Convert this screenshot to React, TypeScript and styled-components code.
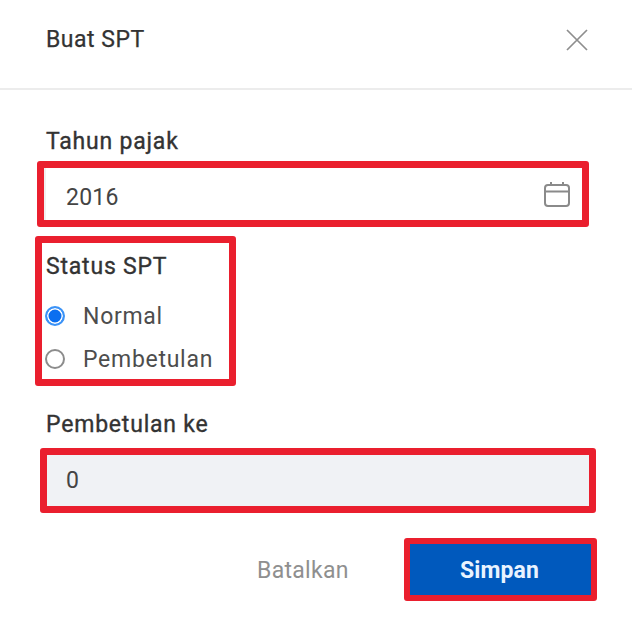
import React from "react";
import styled, { createGlobalStyle } from "styled-components";

const Global = createGlobalStyle`
  html, body { margin: 0; padding: 0; background: #fff; }
  body { font-family: Roboto, "Liberation Sans", sans-serif; color: #333; }
`;

const Dialog = styled.div`
  width: 632px;
  height: 628px;
  overflow: hidden;
  background: #fff;
  display: flex;
  flex-direction: column;
`;

const Header = styled.header`
  box-sizing: border-box;
  border-bottom: 2px solid #ececec;
  height: 90px;
  padding: 0 44px 0 46px;
  display: flex;
  align-items: flex-start;
  justify-content: space-between;
`;

const Title = styled.h1`
  margin: 26px 0 0;
  font-size: 23px;
  line-height: 28px;
  font-weight: 400;
  letter-spacing: 0.5px;
  color: #333;
  -webkit-text-stroke: 0.25px #333;
`;

const Close = styled.button`
  margin: 29px 0 0;
  padding: 0;
  width: 22px;
  height: 22px;
  border: 0;
  background: none;
  display: flex;
`;

const Body = styled.div`
  display: flex;
  flex-direction: column;
  align-items: flex-start;
`;

const Label = styled.label<{ $top: number; $left?: number }>`
  display: block;
  margin: ${(p) => p.$top}px 0 0 ${(p) => p.$left ?? 46}px;
  font-size: 23px;
  line-height: 28px;
  font-weight: 400;
  letter-spacing: 0.8px;
  color: #333;
  -webkit-text-stroke: 0.35px #333;
`;

const Frame = styled.div<{ $top: number; $left: number; $w: number; $h: number }>`
  box-sizing: border-box;
  margin: ${(p) => p.$top}px 0 0 ${(p) => p.$left}px;
  width: ${(p) => p.$w}px;
  height: ${(p) => p.$h}px;
  border: 7px solid #ea1f2e;
  border-radius: 3px;
`;

const Input = styled.div<{ $disabled?: boolean }>`
  height: 100%;
  box-sizing: border-box;
  padding: ${(p) => (p.$disabled ? "0" : "6px")} 11px 0 ${(p) => (p.$disabled ? 19 : 20)}px;
  display: flex;
  align-items: center;
  justify-content: space-between;
  font-size: 23px;
  letter-spacing: 0.25px;
  color: #444;
  background: ${(p) => (p.$disabled ? "#f0f2f5" : "#fff")};
  border-left: ${(p) => (p.$disabled ? "0" : "2px solid #f0f0f0")};
`;

const CalendarIcon = styled.svg`
  margin-top: -6px;
`;

const Option = styled.div<{ $top: number }>`
  display: flex;
  align-items: center;
  margin: ${(p) => p.$top}px 0 0 3px;
  height: 28px;
  font-size: 23px;
  letter-spacing: 0.72px;
  color: #4d4d4d;
`;

const Radio = styled.span<{ $on?: boolean }>`
  box-sizing: border-box;
  flex: none;
  width: 20px;
  height: 20px;
  margin-right: 18px;
  border-radius: 50%;
  border: ${(p) => (p.$on ? "2px solid #3b93f7" : "2px solid #8c8c8c")};
  background: ${(p) => (p.$on ? "#0b6ff0" : "#fff")};
  box-shadow: ${(p) => (p.$on ? "inset 0 0 0 1.5px #fff" : "none")};
`;

const Footer = styled.footer`
  display: flex;
  align-items: center;
  margin-top: 25px;
  padding-left: 257px;
`;

const Cancel = styled.button`
  width: 147px;
  padding: 2px 0 0;
  border: 0;
  background: none;
  text-align: left;
  font: 400 23px/28px Roboto, sans-serif;
  letter-spacing: 0.3px;
  color: #8f8f8f;
`;

const SaveFrame = styled.div`
  box-sizing: border-box;
  width: 193px;
  height: 63px;
  border: 6px solid #ea1f2e;
  border-radius: 3px;
`;

const Save = styled.button`
  width: 100%;
  height: 100%;
  padding: 2px 2px 0 0;
  border: 0;
  background: #0059bd;
  color: #e9f3ff;
  font: 700 23px/28px Roboto, sans-serif;
  letter-spacing: 0.1px;
`;

export default function App() {
  return (
    <Dialog>
      <Global />
      <Header>
        <Title>Buat SPT</Title>
        <Close aria-label="Tutup">
          <svg width="22" height="22" viewBox="0 0 22 22" fill="none" stroke="#8e8e8e" strokeWidth="1.7">
            <path d="M1 1 21 21M21 1 1 21" />
          </svg>
        </Close>
      </Header>
      <Body>
        <Label $top={38}>Tahun pajak</Label>
        <Frame $top={5} $left={37} $w={552} $h={66}>
          <Input>
            2016
            <CalendarIcon width="28" height="28" viewBox="0 0 28 28" fill="none" stroke="#8a8a8a" strokeWidth="2">
              <rect x="2" y="5" width="24" height="21" rx="3" />
              <path d="M2 11.5H26M8 2V5M20 2V5" />
            </CalendarIcon>
          </Input>
        </Frame>
        <Frame $top={9} $left={35} $w={201} $h={150}>
          <Label $top={10} $left={4}>Status SPT</Label>
          <Option $top={21}>
            <Radio $on />
            Normal
          </Option>
          <Option $top={15}>
            <Radio />
            Pembetulan
          </Option>
        </Frame>
        <Label $top={25}>Pembetulan ke</Label>
        <Frame $top={9} $left={40} $w={556} $h={65}>
          <Input $disabled>0</Input>
        </Frame>
        <Footer>
          <Cancel>Batalkan</Cancel>
          <SaveFrame>
            <Save>Simpan</Save>
          </SaveFrame>
        </Footer>
      </Body>
    </Dialog>
  );
}
